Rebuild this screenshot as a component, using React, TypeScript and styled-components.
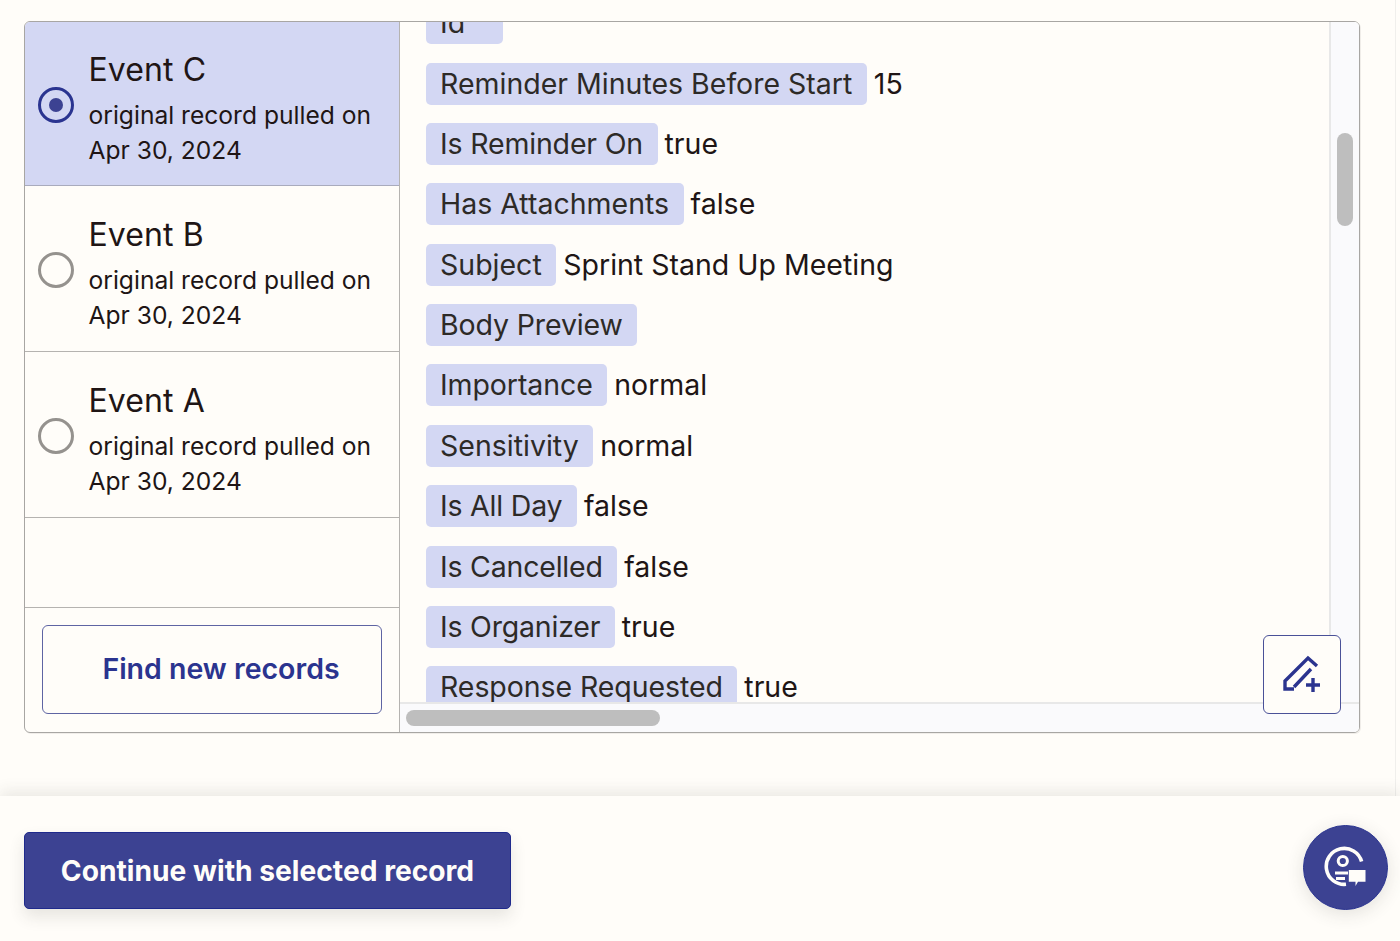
import React from "react";
import styled, { createGlobalStyle } from "styled-components";

const Global = createGlobalStyle`
  html, body { margin: 0; padding: 0; height: 100%; background: #fffdf9; overflow: hidden; }
  * { box-sizing: border-box; }
`;

const Page = styled.div`
  width: 1400px;
  height: 941px;
  display: flex;
  flex-direction: column;
  overflow: hidden;
  background: #fffdf9;
  color: #201515;
  font-family: Inter, "Liberation Sans", sans-serif;
`;

const Main = styled.main`
  height: 796px;
  padding: 21px 40px 0 24px;
  flex: none;
`;

const Panel = styled.section`
  width: 1336px;
  height: 712px;
  display: grid;
  grid-template-columns: 375px 1fr;
  border: 1px solid #a8a6a3;
  border-radius: 6px;
  overflow: hidden;
  position: relative;
  box-shadow: 1px 1px 0 rgba(60, 55, 50, 0.08);
`;

const Sidebar = styled.aside`
  display: flex;
  flex-direction: column;
  border-right: 1px solid #b5b3b0;
`;

const Record = styled.div<{ $selected?: boolean; $h: number }>`
  height: ${(p) => p.$h}px;
  flex: none;
  display: flex;
  align-items: center;
  gap: 14.5px;
  padding: 0 14px 0 13px;
  background: ${(p) => (p.$selected ? "#d3d7f3" : "transparent")};
  border-bottom: 1px solid ${(p) => (p.$selected ? "#a9abbd" : "#b5b3b0")};
`;

const Radio = styled.span<{ $selected?: boolean }>`
  width: 36px;
  height: 36px;
  flex: none;
  margin-top: 2px;
  border-radius: 50%;
  border: 3px solid ${(p) => (p.$selected ? "#2a3490" : "#95928e")};
  display: flex;
  align-items: center;
  justify-content: center;
  &::after {
    content: "";
    display: ${(p) => (p.$selected ? "block" : "none")};
    width: 14px;
    height: 14px;
    border-radius: 50%;
    background: #3c4292;
  }
`;

const RecordText = styled.div`
  display: flex;
  flex-direction: column;
  margin-top: 10px;
`;

const RecordTitle = styled.div`
  font-size: 32px;
  line-height: 40px;
  margin-bottom: 8px;
  letter-spacing: 0.1px;
`;

const RecordMeta = styled.div`
  font-size: 24.6px;
  line-height: 35px;
  white-space: pre-line;
`;

const SideSpacer = styled.div`
  height: 89.5px;
  flex: none;
  border-bottom: 1px solid #b5b3b0;
`;

const SideFooter = styled.div`
  flex: 1;
  padding: 17px 17px 18px 17px;
`;

const FindButton = styled.button`
  width: 340px;
  height: 89px;
  display: block;
  background: transparent;
  border: 1px solid #5e64a3;
  border-radius: 6px;
  color: #2b348f;
  font: 600 28.5px Inter, "Liberation Sans", sans-serif;
  padding: 0 0 2px 18px;
`;

const Content = styled.div`
  display: grid;
  grid-template-columns: 1fr 30px;
  grid-template-rows: 1fr 30px;
  min-height: 0;
  min-width: 0;
  background: #fffdf9;
`;

const Viewport = styled.div`
  overflow: hidden;
  min-height: 0;
  padding: 0 0 0 26px;
`;

const FieldList = styled.dl`
  margin: -19.6px 0 0;
  display: flex;
  flex-direction: column;
  gap: 18.35px;
`;

const FieldRow = styled.div`
  display: flex;
  align-items: center;
  gap: 7px;
  height: 42px;
  font-size: 28.5px;
  white-space: nowrap;
`;

const Key = styled.dt<{ $minW?: number; $track?: number }>`
  height: 42px;
  min-width: ${(p) => p.$minW ?? 0}px;
  line-height: 42px;
  padding: 0 14.5px 0 14px;
  background: #d3d7f3;
  border-radius: 5px;
  color: #2d2a27;
  letter-spacing: ${(p) => p.$track ?? 0}px;
`;

const Val = styled.dd`
  margin: 0;
  line-height: 42px;
  color: #201515;
`;

const VTrack = styled.div`
  grid-row: 1;
  grid-column: 2;
  background: #fafafc;
  border-left: 2px solid #e8e8e8;
  padding: 111px 5px 0 6px;
`;

const VThumb = styled.div`
  width: 16px;
  height: 93px;
  border-radius: 8px;
  background: #bebebe;
`;

const HTrack = styled.div`
  grid-row: 2;
  grid-column: 1 / 3;
  background: #fafafc;
  border-top: 2px solid #e8e8e8;
  padding: 6px 0 0 6px;
`;

const HThumb = styled.div`
  width: 254px;
  height: 16px;
  border-radius: 8px;
  background: #bebebe;
`;

const EditButton = styled.button`
  position: absolute;
  left: 1238px;
  top: 613px;
  width: 78px;
  height: 79px;
  background: #fffdf9;
  border: 1px solid #4a5198;
  border-radius: 6px;
  padding: 0;
  display: flex;
  align-items: center;
  justify-content: center;
`;

const Footer = styled.footer`
  flex: 1;
  display: flex;
  align-items: center;
  justify-content: space-between;
  padding: 0 12px 0 24px;
  position: relative;
  background: #fffdf9;
  box-shadow: 0 -5px 14px rgba(60, 55, 50, 0.1);
`;

const Continue = styled.button`
  width: 487px;
  height: 77px;
  margin-top: 4px;
  border: 1px solid #1f2a8c;
  border-radius: 5px;
  background: #3c4292;
  color: #fffdf9;
  font: 700 28.2px Inter, "Liberation Sans", sans-serif;
  box-shadow: 0 8px 16px rgba(60, 55, 50, 0.12);
`;

const Help = styled.button`
  width: 85px;
  height: 85px;
  margin-top: -3px;
  border-radius: 50%;
  border: 1px solid #2a3490;
  background: #3c4292;
  padding: 0;
  display: flex;
  align-items: center;
  justify-content: center;
  box-shadow: 0 4px 18px rgba(60, 55, 50, 0.14);
`;

const RightEdge = styled.div`
  position: absolute;
  left: 1395px;
  top: 0;
  bottom: 145px;
  width: 1px;
  background: #f0efec;
`;

const records = [
  { name: "Event C", h: 164, selected: true },
  { name: "Event B", h: 166 },
  { name: "Event A", h: 166 },
];

type Field = { k: string; v?: string; minW?: number; track?: number };

const fields: Field[] = [
  { k: "Id", minW: 77 },
  { k: "Reminder Minutes Before Start", v: "15" },
  { k: "Is Reminder On", v: "true", track: -0.17 },
  { k: "Has Attachments", v: "false" },
  { k: "Subject", v: "Sprint Stand Up Meeting" },
  { k: "Body Preview", track: -0.12 },
  { k: "Importance", v: "normal", track: -0.08 },
  { k: "Sensitivity", v: "normal" },
  { k: "Is All Day", v: "false", track: -0.2 },
  { k: "Is Cancelled", v: "false", track: -0.2 },
  { k: "Is Organizer", v: "true", track: -0.2 },
  { k: "Response Requested", v: "true", track: -0.08 },
];

export default function App() {
  return (
    <Page>
      <Global />
      <RightEdge />
      <Main>
        <Panel>
          <Sidebar>
            {records.map((r) => (
              <Record key={r.name} $selected={r.selected} $h={r.h}>
                <Radio $selected={r.selected} />
                <RecordText>
                  <RecordTitle>{r.name}</RecordTitle>
                  <RecordMeta>{"original record pulled on\nApr 30, 2024"}</RecordMeta>
                </RecordText>
              </Record>
            ))}
            <SideSpacer />
            <SideFooter>
              <FindButton>Find new records</FindButton>
            </SideFooter>
          </Sidebar>
          <Content>
            <Viewport>
              <FieldList>
                {fields.map((f) => (
                  <FieldRow key={f.k}>
                    <Key $minW={f.minW} $track={f.track}>{f.k}</Key>
                    {f.v && <Val>{f.v}</Val>}
                  </FieldRow>
                ))}
              </FieldList>
            </Viewport>
            <VTrack>
              <VThumb />
            </VTrack>
            <HTrack>
              <HThumb />
            </HTrack>
          </Content>
          <EditButton aria-label="Edit">
            <svg width="40" height="40" viewBox="0 0 40 40" fill="none" stroke="#2b348f" strokeWidth="3.4">
              <path d="M12 32 L29 14 M35 11 L26 3 L3 26 V34 H12" />
              <path d="M31 23 V37 M24 30 H38" />
            </svg>
          </EditButton>
        </Panel>
      </Main>
      <Footer>
        <Continue>Continue with selected record</Continue>
        <Help aria-label="Help">
          <svg width="44" height="44" viewBox="0 0 44 44" fill="none" stroke="#fffdf9" strokeWidth="3.6">
            <path d="M37.6 16.5 A18 18 0 1 0 22 39.3" />
            <circle cx="18.8" cy="16" r="4.6" strokeWidth="3" />
            <path d="M11 28 H24" strokeWidth="3" />
            <path d="M12 33.5 H21" strokeWidth="3" />
            <path d="M24.8 25 H41.5 V36.7 H34 L31.5 41 V36.7 H24.8 Z" fill="#fffdf9" stroke="none" />
          </svg>
        </Help>
      </Footer>
    </Page>
  );
}
